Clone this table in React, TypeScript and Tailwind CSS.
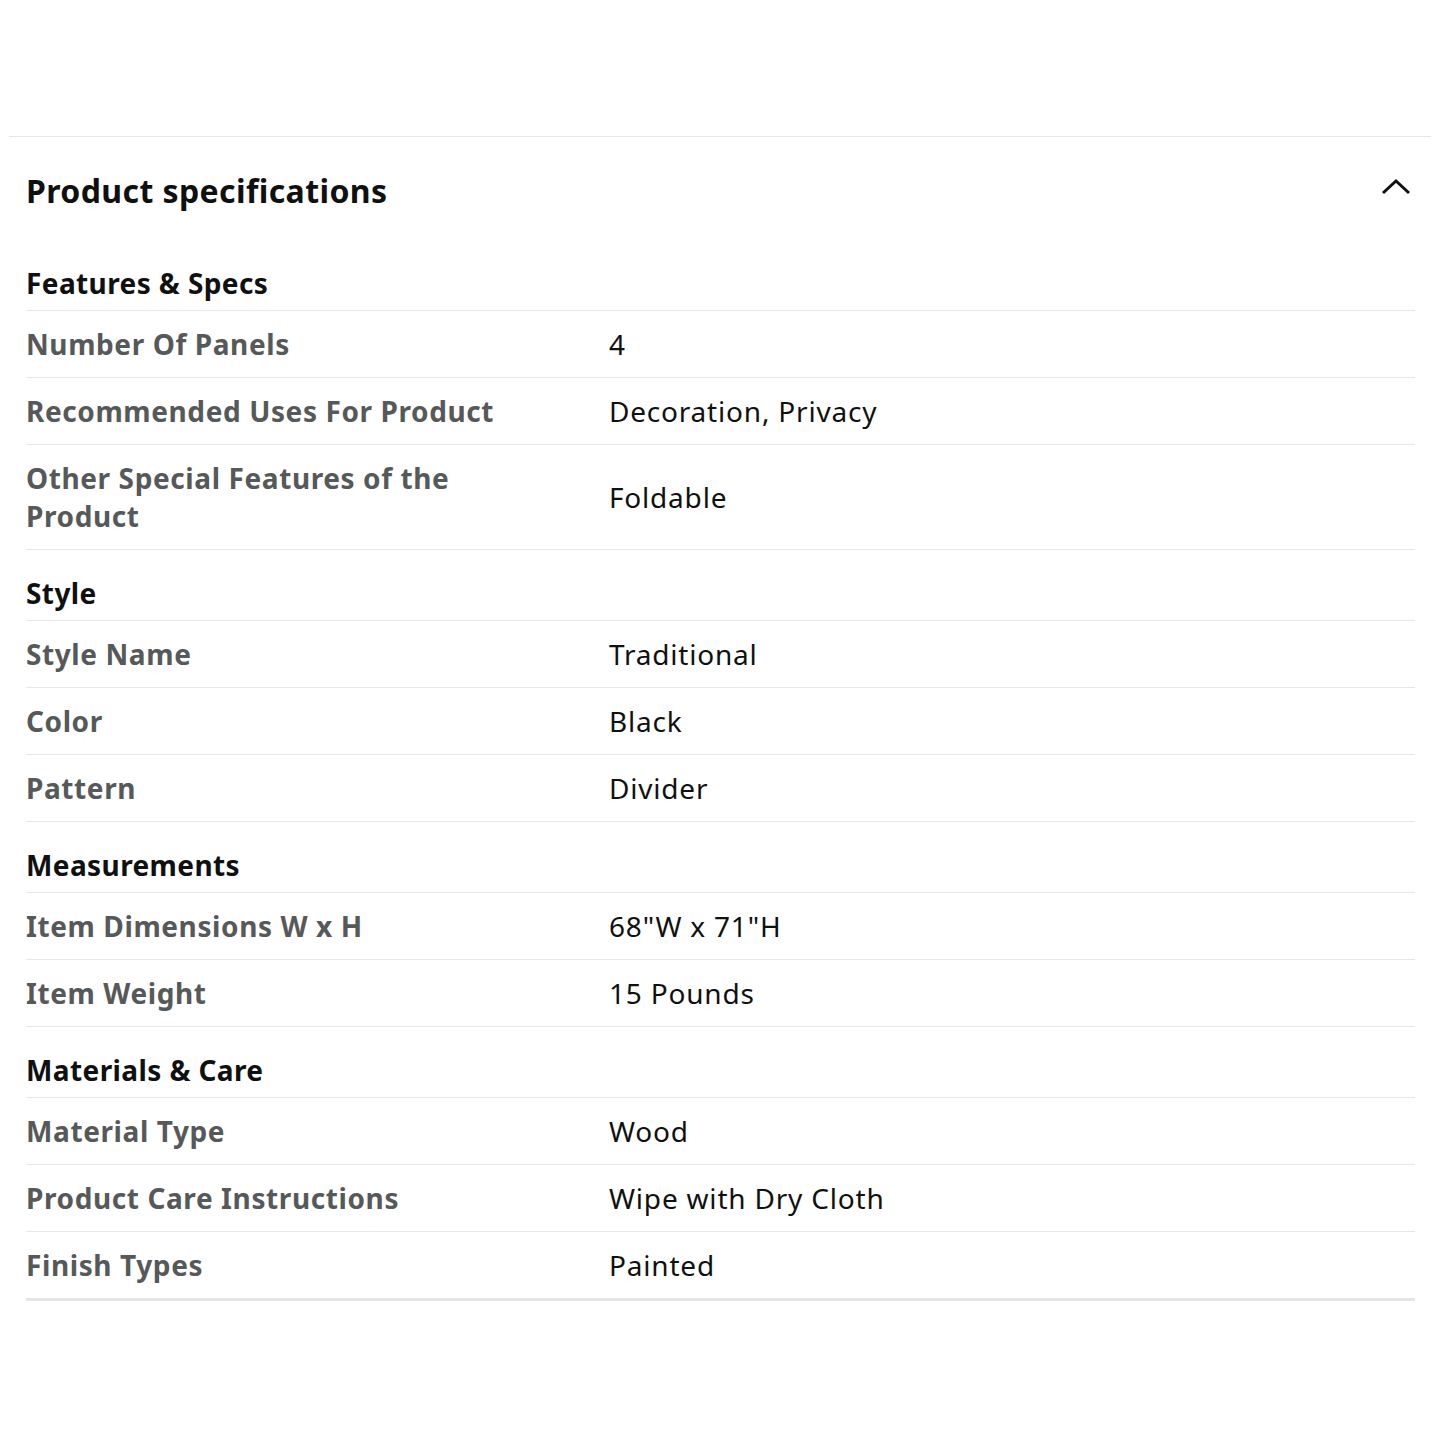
import React from "react";

type Row = { label: string; value: string };
type Section = { title: string; rows: Row[] };

const sections: Section[] = [
  {
    title: "Features & Specs",
    rows: [
      { label: "Number Of Panels", value: "4" },
      { label: "Recommended Uses For Product", value: "Decoration, Privacy" },
      { label: "Other Special Features of the Product", value: "Foldable" },
    ],
  },
  {
    title: "Style",
    rows: [
      { label: "Style Name", value: "Traditional" },
      { label: "Color", value: "Black" },
      { label: "Pattern", value: "Divider" },
    ],
  },
  {
    title: "Measurements",
    rows: [
      { label: "Item Dimensions W x H", value: '68"W x 71"H' },
      { label: "Item Weight", value: "15 Pounds" },
    ],
  },
  {
    title: "Materials & Care",
    rows: [
      { label: "Material Type", value: "Wood" },
      { label: "Product Care Instructions", value: "Wipe with Dry Cloth" },
      { label: "Finish Types", value: "Painted" },
    ],
  },
];

export default function App() {
  return (
    <div
      className="w-[1440px] min-h-[1440px] bg-white text-[#0f1111]"
      style={{ fontFamily: '"Noto Sans", "Open Sans", Arial, sans-serif' }}
    >
      <div className="h-[136px]" />
      <div className="mx-[9px] border-t border-[#e7e7e7]">
        <div className="px-[17px] pr-[16px]">
          <div className="flex items-center justify-between pt-[34px]">
            <h2 className="text-[32px] leading-[40px] font-bold tracking-[0.4px]">
              Product specifications
            </h2>
            <svg
              width="32"
              height="20"
              viewBox="0 0 32 20"
              className="mr-[3px] -mt-[8px]"
            >
              <path
                d="M3 16 L16 4 L29 16"
                fill="none"
                stroke="#0f1111"
                strokeWidth="3"
              />
            </svg>
          </div>
          <div className="pt-[29px]">
            {sections.map((s, si) => (
              <div key={s.title}>
                <div className="pt-[24px] pb-[8px] border-b border-[#e7e7e7] text-[28px] leading-[38px] font-bold tracking-[0.4px]">
                  {s.title}
                </div>
                {s.rows.map((r, ri) => {
                  const last =
                    si === sections.length - 1 && ri === s.rows.length - 1;
                  return (
                    <div
                      key={r.label}
                      className={
                        "flex items-center py-[14px] " +
                        (last
                          ? "border-b-[3px] border-[#e3e6e6]"
                          : "border-b border-[#e7e7e7]")
                      }
                    >
                      <div className="w-[583px] pr-[110px] text-[28px] leading-[38px] font-bold tracking-[0.6px] text-[#565959]">
                        {r.label}
                      </div>
                      <div className="flex-1 text-[28px] leading-[38px] tracking-[0.8px] text-[#0f1111]">
                        {r.value}
                      </div>
                    </div>
                  );
                })}
              </div>
            ))}
          </div>
        </div>
      </div>
    </div>
  );
}
